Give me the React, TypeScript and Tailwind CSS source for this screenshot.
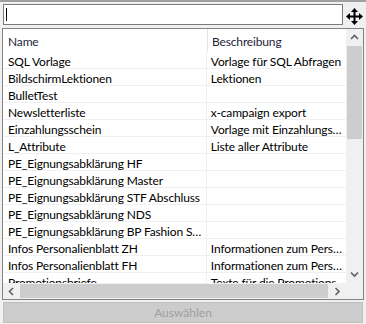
import React from "react";

const rows: [string, string][] = [
  ["SQL Vorlage", "Vorlage für SQL Abfragen"],
  ["BildschirmLektionen", "Lektionen"],
  ["BulletTest", ""],
  ["Newsletterliste", "x-campaign export"],
  ["Einzahlungsschein", "Vorlage mit Einzahlungsschein"],
  ["L_Attribute", "Liste aller Attribute"],
  ["PE_Eignungsabklärung HF", ""],
  ["PE_Eignungsabklärung Master", ""],
  ["PE_Eignungsabklärung STF Abschluss", ""],
  ["PE_Eignungsabklärung NDS", ""],
  ["PE_Eignungsabklärung BP Fashion Spezialist", ""],
  ["Infos Personalienblatt ZH", "Informationen zum Personalienblatt"],
  ["Infos Personalienblatt FH", "Informationen zum Personalienblatt"],
  ["Promotionsbriefe", "Texte für die Promotionsbriefe"],
];

function MoveIcon() {
  return (
    <svg width="17" height="17" viewBox="0 0 17 17">
      <rect x="7.5" y="3" width="2" height="11" fill="#000" />
      <rect x="3" y="7.5" width="11" height="2" fill="#000" />
      <polygon points="8.5,0 5,4 12,4" fill="#000" />
      <polygon points="8.5,17 5,13 12,13" fill="#000" />
      <polygon points="0,8.5 4,5 4,12" fill="#000" />
      <polygon points="17,8.5 13,5 13,12" fill="#000" />
    </svg>
  );
}

function Chevron({ dir }: { dir: "up" | "down" | "left" | "right" }) {
  const paths: Record<string, string> = {
    up: "M1 5 L4.5 1.5 L8 5",
    down: "M1 1.5 L4.5 5 L8 1.5",
    left: "M5 1 L1.5 4.5 L5 8",
    right: "M1.5 1 L5 4.5 L1.5 8",
  };
  const horiz = dir === "up" || dir === "down";
  return (
    <svg width={horiz ? 9 : 7} height={horiz ? 7 : 9} viewBox={horiz ? "0 0 9 7" : "0 0 7 9"}>
      <path d={paths[dir]} fill="none" stroke="#606060" strokeWidth="1.6" />
    </svg>
  );
}

export default function App() {
  return (
    <div
      className="w-[366px] h-[324px] bg-[#f0f0f0] border-t-2 border-[#a0a0a0] flex flex-col overflow-hidden"
      style={{ fontFamily: 'Lato, "Segoe UI", sans-serif' }}
    >
      <div className="flex items-start h-[25px] pt-[2px] pl-[3px]">
        <div className="w-[340px] h-[21px] bg-white border border-[#7a7a7a] flex items-center pl-[2px]">
          <div className="w-px h-[13px] bg-black" />
        </div>
        <div className="ml-[3px] mt-[4px]">
          <MoveIcon />
        </div>
      </div>
      <div className="ml-[2px] mt-[1px] w-[362px] h-[272px] border border-[#828282] bg-white flex flex-col">
        <div className="flex flex-1 min-h-0">
          <div className="flex-1 overflow-hidden text-[12px] text-black tracking-[-0.15px]">
            <div className="flex h-[23px]">
              <div className="w-[205px] pl-[5px] pt-[6px] leading-[14px] text-[#1e1e3c] border-r border-[#e5e5e5] h-full">Name</div>
              <div className="pl-[4px] pt-[6px] leading-[14px] text-[#1e1e3c]">Beschreibung</div>
            </div>
            {rows.map(([a, b], i) => (
              <div key={i} className="flex h-[17px] border-b border-[#f0f0f0] leading-[14px]">
                <div className="w-[205px] pl-[5px] pr-[1px] pt-[3px] border-r border-[#f0f0f0] whitespace-nowrap overflow-hidden text-ellipsis">
                  {a}
                </div>
                <div className="w-[140px] pl-[4px] pt-[3px] whitespace-nowrap overflow-hidden text-ellipsis">{b}</div>
              </div>
            ))}
          </div>
          <div className="w-[17px] bg-[#f0f0f0] flex flex-col items-center">
            <div className="h-[17px] flex items-center justify-center">
              <Chevron dir="up" />
            </div>
            <div className="w-[15px] h-[93px] bg-[#cdcdcd]" />
            <div className="flex-1" />
            <div className="h-[17px] flex items-center justify-center">
              <Chevron dir="down" />
            </div>
          </div>
        </div>
        <div className="h-[16px] flex bg-[#f0f0f0]">
          <div className="w-[17px] flex items-center justify-center">
            <Chevron dir="left" />
          </div>
          <div className="w-[308px] h-[14px] mt-px bg-[#cdcdcd]" />
          <div className="flex-1 flex items-center justify-center">
            <Chevron dir="right" />
          </div>
          <div className="w-[17px] bg-[#f0f0f0]" />
        </div>
      </div>
      <div className="ml-[3px] mt-[2px] w-[360px] h-[21px] bg-[#cccccc] border border-[#bfbfbf] flex items-center justify-center text-[12px] text-[#a0a0a0]">
        Auswählen
      </div>
    </div>
  );
}
